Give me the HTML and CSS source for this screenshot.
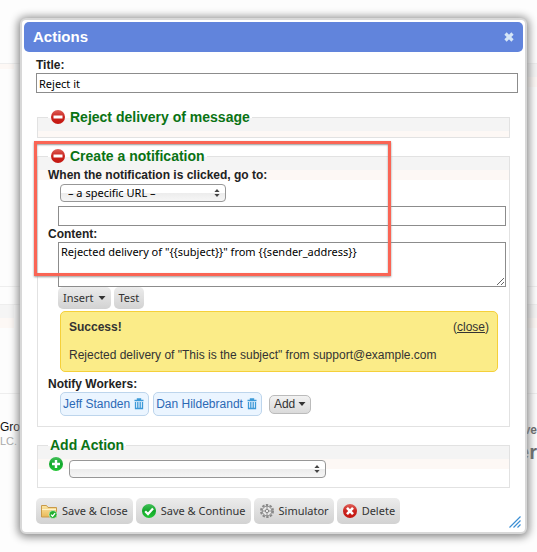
FILE: index.html
```html
<!DOCTYPE html>
<html lang="en">
<head>
<meta charset="utf-8">
<title>Actions</title>
<link rel="stylesheet" href="styles.css">
</head>
<body>
<svg class="defs" aria-hidden="true">
  <defs>
    <linearGradient id="red" x1="0" y1="0" x2="0" y2="1"><stop offset="0" stop-color="#e0615a"/><stop offset=".5" stop-color="#c9231d"/><stop offset="1" stop-color="#c41610"/></linearGradient>
    <linearGradient id="green" x1="0" y1="0" x2="0" y2="1"><stop offset="0" stop-color="#43c05a"/><stop offset=".5" stop-color="#12a62a"/><stop offset="1" stop-color="#25c736"/></linearGradient>
    <linearGradient id="folder" x1="0" y1="0" x2="0" y2="1"><stop offset="0" stop-color="#fbe6a4"/><stop offset="1" stop-color="#e9b958"/></linearGradient>
    <symbol id="minus" viewBox="0 0 16 16"><circle cx="8" cy="8" r="7" fill="url(#red)"/><path d="M3.5 6.5h9v3h-9z" fill="#fff"/></symbol>
    <symbol id="plus" viewBox="0 0 16 16"><circle cx="8" cy="8" r="7" fill="url(#green)"/><path d="M8 4v8M4 8h8" stroke="#fff" stroke-width="2.4"/></symbol>
    <symbol id="check" viewBox="0 0 16 16"><circle cx="8" cy="8" r="7" fill="url(#green)"/><path d="M4.2 8.2l2.8 2.9 5-5.6" fill="none" stroke="#fff" stroke-width="2.2"/></symbol>
    <symbol id="cross" viewBox="0 0 16 16"><circle cx="8" cy="8" r="7" fill="url(#red)"/><path d="M5 4.8l6 6.4M11 4.8l-6 6.4" stroke="#fff" stroke-width="2.6"/></symbol>
    <symbol id="updown" viewBox="0 0 6 8"><path d="M3 0l2.6 3H.4zM3 8l2.6-3H.4z" fill="#444"/></symbol>
    <symbol id="down" viewBox="0 0 8 4"><path d="M.5 0h7L4 4z" fill="#333"/></symbol>
    <symbol id="trash" viewBox="0 0 10 12"><path d="M.5 2.5h9M3.5 2V1h3v1" fill="none" stroke="#3d9ad8" stroke-width="1.4"/><path d="M1.5 4v6.5h7V4M3.8 4v6M6.2 4v6" fill="none" stroke="#3d9ad8" stroke-width="1.3"/></symbol>
  </defs>
</svg>
<div class="stage">
  <div class="backdrop" aria-hidden="true">
    <div class="page-row row-top"><i class="band band-left"></i><i class="band band-right"></i></div>
    <div class="page-row row-gap"></div>
    <div class="page-row row-mid"><i class="band band-left"></i><i class="band band-right"></i></div>
    <div class="page-row row-foot">
      <div><p class="bg-name">Group</p><p class="bg-legal">LC.</p></div>
      <div class="bg-brand"><p class="bg-small">ve</p><p class="bg-big">er</p></div>
    </div>
  </div>

  <div class="dialog" role="dialog" aria-labelledby="dialog-title">
    <header class="titlebar">
      <h1 id="dialog-title">Actions</h1>
      <button class="close" type="button" aria-label="Close"><svg width="10" height="10" viewBox="0 0 10 10"><path d="M1.5 1.5l7 7M8.5 1.5l-7 7" stroke="#d6e6f7" stroke-width="3.2"/></svg></button>
    </header>

    <form class="content">
      <label class="label" for="title">Title:</label>
      <input class="field" id="title" type="text" value="Reject it">

      <fieldset class="group group-empty">
        <legend><svg class="icon" width="16" height="16"><use href="#minus"/></svg>Reject delivery of message</legend>
      </fieldset>

      <fieldset class="group group-notify">
        <legend><svg class="icon" width="16" height="16"><use href="#minus"/></svg>Create a notification</legend>
        <label class="label" for="target">When the notification is clicked, go to:</label>
        <div class="indent">
          <span class="select select-target"><select id="target"><option>– a specific URL –</option></select><svg width="6" height="8"><use href="#updown"/></svg></span>
          <input class="field" type="text" aria-label="URL">
        </div>
        <label class="label" for="body">Content:</label>
        <div class="indent">
          <textarea class="field area" id="body">Rejected delivery of "{{subject}}" from {{sender_address}}</textarea>
          <div class="tools">
            <button class="btn btn-tool" type="button">Insert <svg width="8" height="4"><use href="#down"/></svg></button>
            <button class="btn btn-tool" type="button">Test</button>
          </div>
          <div class="success">
            <div class="success-head"><strong>Success!</strong><span>(<a href="#">close</a>)</span></div>
            <p>Rejected delivery of "This is the subject" from support@example.com</p>
          </div>
        </div>
        <div class="label">Notify Workers:</div>
        <div class="workers">
          <span class="bubble"><a href="#">Jeff Standen</a><svg width="10" height="12"><use href="#trash"/></svg></span>
          <span class="bubble"><a href="#">Dan Hildebrandt</a><svg width="10" height="12"><use href="#trash"/></svg></span>
          <button class="add" type="button">Add <svg width="8" height="4"><use href="#down"/></svg></button>
        </div>
      </fieldset>

      <fieldset class="group group-add">
        <legend>Add Action</legend>
        <div class="add-row">
          <svg class="icon" width="16" height="16"><use href="#plus"/></svg>
          <span class="select select-action"><select aria-label="Add Action"><option></option></select><svg width="6" height="8"><use href="#updown"/></svg></span>
        </div>
      </fieldset>

      <div class="actions">
        <button class="btn" type="button"><svg width="17" height="16" viewBox="0 0 17 16"><path d="M.5 14V2.5h5l1.5 2h8.5V14z" fill="url(#folder)" stroke="#c99a4a"/><path d="M1 6.5h14" stroke="#fff2c8"/><circle cx="12" cy="11.5" r="4" fill="#20b030" stroke="#e9f7e4" stroke-width=".6"/><path d="M10 11.6l1.6 1.6 2.5-3.1" fill="none" stroke="#fff" stroke-width="1.3"/></svg>Save &amp; Close</button>
        <button class="btn" type="button"><svg width="16" height="16"><use href="#check"/></svg>Save &amp; Continue</button>
        <button class="btn" type="button"><svg width="16" height="16" viewBox="0 0 16 16" fill="none" stroke="#8a8a8a"><circle cx="8" cy="8" r="6" stroke-width="2" stroke-dasharray="2.4 1.37"/><circle cx="8" cy="8" r="4.8" fill="#e8e8e8"/><circle cx="8" cy="8" r="1.7"/><path d="M8 3.5v2.8M8 9.7v2.8M3.5 8h2.8M9.7 8h2.8" stroke-width=".9"/></svg>Simulator</button>
        <button class="btn" type="button"><svg width="16" height="16"><use href="#cross"/></svg>Delete</button>
      </div>
    </form>
    <svg class="grip" width="12" height="12" viewBox="0 0 12 12"><path d="M.5 11.5l11-11M4.5 11.5l7-7M8.5 11.5l3-3" stroke="#3a8fd4" stroke-width="1.2"/></svg>
    <div class="callout"></div>
  </div>
</div>
</body>
</html>
```

FILE: styles.css
```css
* { box-sizing: border-box; }

body {
  margin: 0;
  background: #fdfdfd;
  color: #222;
  font: 12px/16px "Liberation Sans", Arial, sans-serif;
}

p, h1 { margin: 0; }

.defs { position: absolute; width: 0; height: 0; }

.stage { display: grid; min-height: 100vh; overflow: hidden; }
.stage > * { grid-area: 1 / 1; }

/* page behind the dialog */
.backdrop { padding-top: 63px; }
.page-row { display: flex; justify-content: space-between; border-top: 1px solid #eee; }
.row-top { height: 223px; }
.row-gap { height: 18px; }
.row-mid { height: 89px; }
.row-foot { padding-top: 24px; }
.band { height: 23px; background: linear-gradient(#f5f5f5 13px, #fdf8f5 13px); }
.band-left { width: 14px; }
.band-right { width: 11px; }
.row-top .band-left { height: 5px; background: #fdf8f5; }
.bg-name { color: #111; line-height: 18px; }
.bg-legal { color: #aaa; font-size: 11px; line-height: 10px; }
.bg-brand { color: #666; font-weight: bold; white-space: nowrap; width: 14px; }
.bg-small { padding-top: 4px; direction: rtl; }
.bg-big { font-size: 20px; line-height: 28px; direction: rtl; }

.dialog {
  position: relative;
  align-self: start;
  margin: 18px 10px 18px 20px;
  padding: 2px;
  border: 2px solid #d8d8d8;
  border-radius: 6px;
  background: #fff;
  box-shadow: 0 1px 8px 2px #888;
}

.titlebar {
  display: flex;
  align-items: center;
  justify-content: space-between;
  height: 30px;
  padding: 0 9px;
  border-radius: 5px;
  background: #6184dc;
  color: #fff;
}
.titlebar h1 { font-size: 15px; }
.close { display: flex; padding: 0; border: 0; background: none; }

.content { padding: 5px 5px 6px 12px; }
.label { display: block; font-weight: bold; line-height: 16px; }

.field {
  display: block;
  width: 100%;
  height: 20px;
  margin: 0;
  padding: 1px 2px;
  border: 1px solid #8c8c8c;
  border-radius: 0;
  background: #fff;
  color: #000;
  font: 11px/16px "Noto Sans", "Open Sans", sans-serif;
}

.group {
  min-width: 0;
  margin: 0 8px 0 1px;
  padding: 0 3px 0 10px;
  border: 1px solid #e2e2e2;
  background: linear-gradient(#f4f4f4 13px, #fdf8f5 13px, #fdf8f5 23px, #fff 23px);
}
.group legend {
  display: flex;
  align-items: center;
  gap: 4px;
  padding: 0 2px;
  color: #0a7314;
  font-size: 14px;
  font-weight: bold;
  line-height: 18px;
}
.group-empty { margin-top: 15px; height: 30px; }
.group-notify { margin-top: 9px; padding-top: 2px; padding-bottom: 10px; }
.group-add { margin-top: 9px; padding-bottom: 9px; }

.indent { padding-left: 10px; }

.select { position: relative; display: block; height: 18px; max-width: 100%; }
.select select {
  display: block;
  width: 100%;
  height: 100%;
  padding: 0 7px;
  border: 1px solid #979797;
  border-radius: 4px;
  appearance: none;
  background: linear-gradient(#fff 50%, #ececec 50%, #f6f6f6);
  color: #000;
  font: 11px/14px "Noto Sans", "Open Sans", sans-serif;
}
.select svg { position: absolute; top: 5px; right: 6px; pointer-events: none; }
.select-target { width: 166px; margin: 1px 2px 4px; }
.select-action { width: 257px; }

.area { height: 45px; resize: both; }
.tools { display: flex; gap: 3px; }

.btn {
  display: flex;
  align-items: center;
  gap: 4px;
  height: 26px;
  padding: 0 5px;
  border: 0;
  border-radius: 5px;
  background: linear-gradient(#ececec, #d2d2d2);
  color: #333;
  font: 11px/16px "Noto Sans", "Open Sans", sans-serif;
  white-space: nowrap;
}
.btn-tool { height: 22px; }

.success {
  margin: 2px 8px 4px 2px;
  padding: 7px 8px 8px;
  border: 1px solid #f5d03a;
  border-radius: 5px;
  background: #fbec88;
  color: #333;
}
.success-head { display: flex; justify-content: space-between; margin-bottom: 12px; }
.success a { color: inherit; }

.workers { display: flex; align-items: center; gap: 4px; padding-left: 12px; }
.bubble {
  display: flex;
  align-items: center;
  gap: 4px;
  height: 24px;
  padding: 0 4px 0 2px;
  border: 1px solid #bdd5ec;
  border-radius: 5px;
  background: #ebf5ff;
}
.bubble a { color: #2b69b5; text-decoration: none; }
.add {
  display: flex;
  align-items: center;
  gap: 3px;
  height: 19px;
  margin-left: 3px;
  padding: 0 4px;
  border: 1px solid #bbb;
  border-radius: 5px;
  background: linear-gradient(#f2f2f2, #dadada);
  color: #333;
  font: inherit;
}

.add-row { display: flex; gap: 5px; padding-top: 3px; }
.add-row .icon { margin-top: -1px; }
.add-row .select { margin-top: 3px; }

.actions { display: flex; gap: 3px; margin-top: 10px; }

.grip { position: absolute; right: 4px; bottom: 4px; }

/* highlight frame drawn over the notification settings */
.callout {
  position: absolute;
  top: 121px;
  left: 12px;
  width: 357px;
  height: 135px;
  border: 3px solid #fa6555;
  box-shadow: 0 1px 2px #999, inset 0 1px 2px #999;
  pointer-events: none;
}
```
